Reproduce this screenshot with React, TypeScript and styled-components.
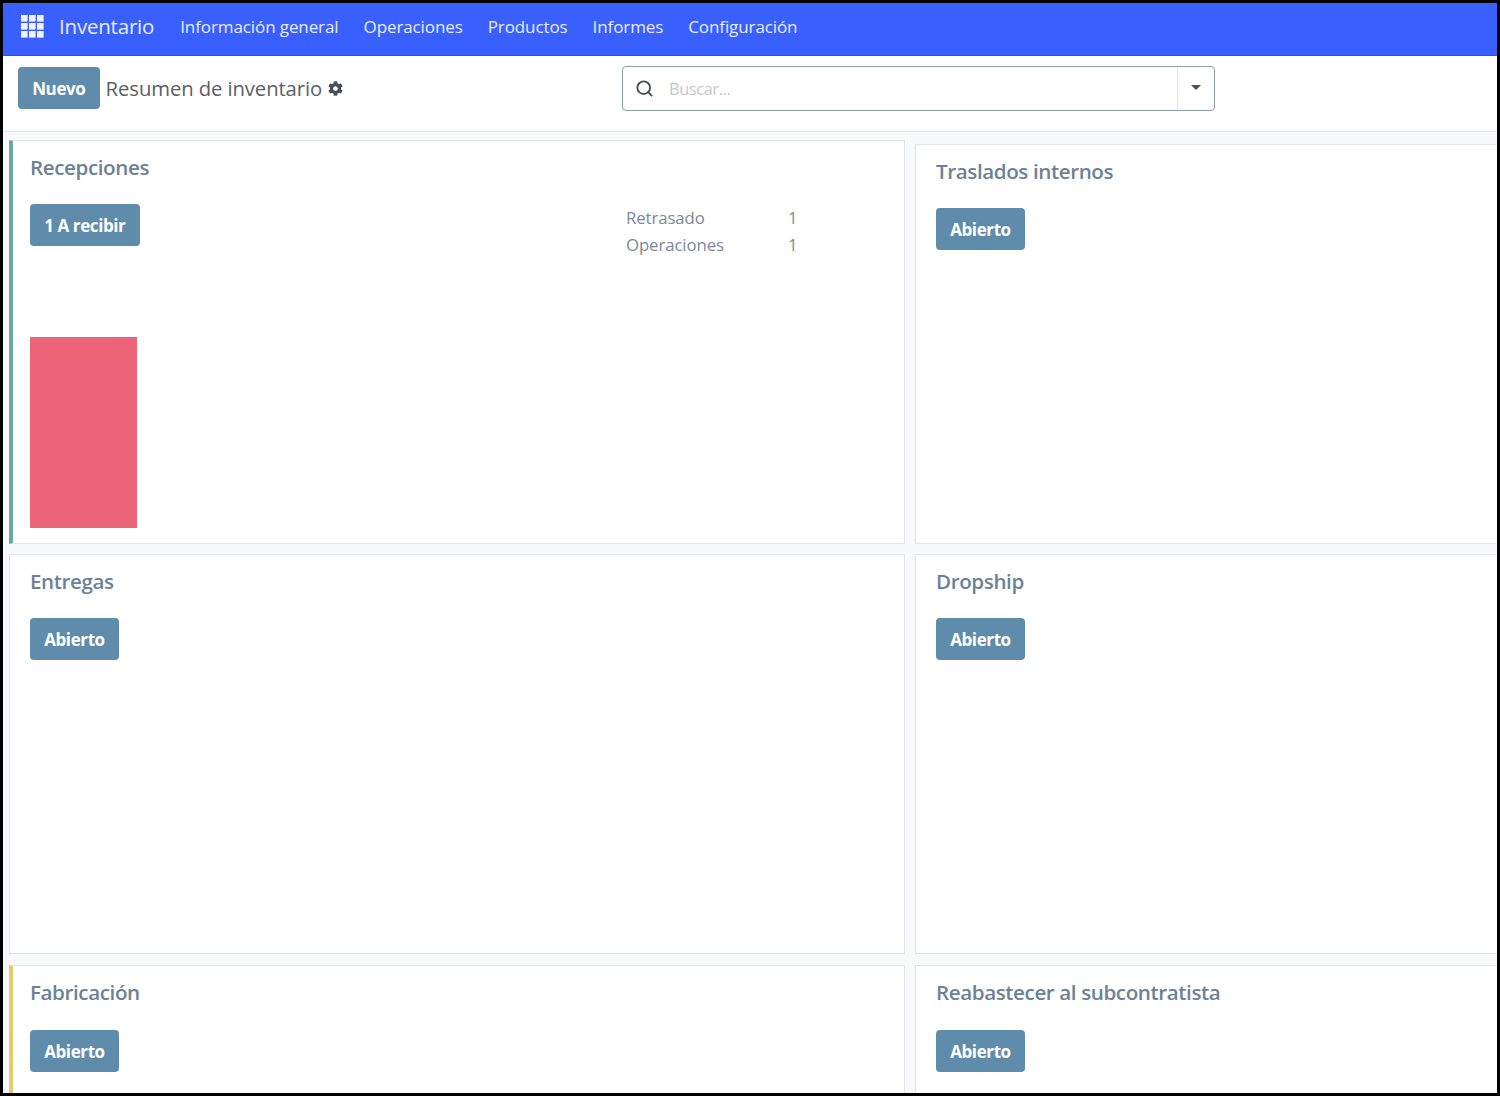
import styled, { createGlobalStyle } from "styled-components";
import { FaCog } from "react-icons/fa";
import { Search } from "lucide-react";

const GlobalStyle = createGlobalStyle`
  html, body {
    margin: 0;
    padding: 0;
    background: #000;
  }
  * {
    box-sizing: border-box;
  }
`;

const menuItems = [
  "Información general",
  "Operaciones",
  "Productos",
  "Informes",
  "Configuración",
];

function AppsIcon() {
  const cells = [0, 8, 16];
  return (
    <svg width="23" height="23" viewBox="0 0 23 23" fill="#f2f2fb">
      {cells.map((y) =>
        cells.map((x) => <rect key={`${x}-${y}`} x={x} y={y} width="6.6" height="6.6" />)
      )}
    </svg>
  );
}

export default function App() {
  return (
    <Frame>
      <GlobalStyle />
      <NavBar>
        <AppsButton>
          <AppsIcon />
        </AppsButton>
        <Brand>Inventario</Brand>
        <Menu>
          {menuItems.map((item) => (
            <MenuItem key={item}>{item}</MenuItem>
          ))}
        </Menu>
      </NavBar>
      <ControlPanel>
        <TitleArea>
          <PrimaryButton>Nuevo</PrimaryButton>
          <PageTitle>Resumen de inventario</PageTitle>
          <GearIcon />
        </TitleArea>
        <SearchBox>
          <SearchField>
            <Search size={19} color="#495057" strokeWidth={2.4} />
            <Placeholder>Buscar...</Placeholder>
          </SearchField>
          <SearchToggle>
            <Caret />
          </SearchToggle>
        </SearchBox>
      </ControlPanel>
      <Dashboard>
        <Card $accent="#6aaba0">
          <CardTitle>Recepciones</CardTitle>
          <CardBody>
            <PrimaryButton>1 A recibir</PrimaryButton>
            <Stats>
              <StatLabel>Retrasado</StatLabel>
              <StatValue>1</StatValue>
              <StatLabel>Operaciones</StatLabel>
              <StatValue>1</StatValue>
            </Stats>
          </CardBody>
          <Bar />
        </Card>
        <OffsetCard>
          <CardTitle>Traslados internos</CardTitle>
          <CardBody>
            <PrimaryButton>Abierto</PrimaryButton>
          </CardBody>
        </OffsetCard>
        <Card>
          <CardTitle>Entregas</CardTitle>
          <CardBody>
            <PrimaryButton>Abierto</PrimaryButton>
          </CardBody>
        </Card>
        <Card>
          <CardTitle>Dropship</CardTitle>
          <CardBody>
            <PrimaryButton>Abierto</PrimaryButton>
          </CardBody>
        </Card>
        <LastRowCard $accent="#e6cb6a">
          <CardTitle>Fabricación</CardTitle>
          <CardBody>
            <PrimaryButton>Abierto</PrimaryButton>
          </CardBody>
        </LastRowCard>
        <LastRowCard>
          <CardTitle>Reabastecer al subcontratista</CardTitle>
          <CardBody>
            <PrimaryButton>Abierto</PrimaryButton>
          </CardBody>
        </LastRowCard>
      </Dashboard>
    </Frame>
  );
}

const Frame = styled.div`
  width: 1500px;
  height: 1096px;
  border: 3px solid #000;
  background: #fff;
  overflow: hidden;
  display: flex;
  flex-direction: column;
  font-family: "Open Sans", "Noto Sans", sans-serif;
`;

const NavBar = styled.nav`
  flex: none;
  height: 53px;
  display: flex;
  align-items: center;
  padding: 0 0 4px 18px;
  background: #3a5fff;
  border-bottom: 1px solid #3c4fb8;
  color: #e6ebff;
`;

const AppsButton = styled.div`
  display: flex;
  margin: -2px 15px 0 0;
`;

const Brand = styled.div`
  font-size: 20.5px;
  letter-spacing: -0.2px;
  margin: -2px 26px 0 0;
`;

const Menu = styled.div`
  display: flex;
  gap: 25px;
  margin-top: -2px;
`;

const MenuItem = styled.div`
  font-size: 17px;
  letter-spacing: -0.1px;
`;

const ControlPanel = styled.div`
  flex: none;
  height: 76px;
  display: flex;
  align-items: flex-start;
  background: #fff;
  border-bottom: 1px solid #e4e6e9;
`;

const TitleArea = styled.div`
  width: 619px;
  display: flex;
  align-items: center;
  padding: 11px 0 0 15px;
`;

const PrimaryButton = styled.button`
  height: 42px;
  padding: 0 14.2px;
  border: 0;
  border-radius: 4px;
  background: #5f8cab;
  color: #fff;
  font-family: inherit;
  font-size: 17px;
  font-weight: 700;
  letter-spacing: -0.4px;
`;

const PageTitle = styled.h1`
  margin: 0 6px 0 6px;
  font-size: 20.3px;
  font-weight: 400;
  letter-spacing: -0.1px;
  color: #595f66;
`;

const GearIcon = styled(FaCog)`
  width: 15px;
  height: 15px;
  color: #495057;
`;

const SearchBox = styled.div`
  width: 593px;
  height: 45px;
  margin-top: 10px;
  display: flex;
  border: 1px solid #8aa0a6;
  border-radius: 4px;
  background: #fff;
`;

const SearchField = styled.div`
  flex: 1;
  display: flex;
  align-items: center;
  gap: 15px;
  padding-left: 12px;
`;

const Placeholder = styled.span`
  font-size: 16.2px;
  letter-spacing: -0.3px;
  color: #c4c8cc;
`;

const SearchToggle = styled.div`
  width: 37px;
  display: flex;
  align-items: center;
  justify-content: center;
  border-left: 1px solid #e4e6e9;
`;

const Caret = styled.span`
  width: 0;
  height: 0;
  margin-bottom: 3px;
  border-left: 5px solid transparent;
  border-right: 5px solid transparent;
  border-top: 5px solid #495057;
`;

const Dashboard = styled.main`
  flex: 1;
  min-height: 0;
  padding: 8px 0 0 6px;
  display: grid;
  grid-template-columns: 896px 600px;
  grid-template-rows: 404px 400px 400px;
  column-gap: 10px;
  row-gap: 10px;
  background: #f8f9fa;
  overflow: hidden;
`;

const Card = styled.section<{ $accent?: string }>`
  display: flex;
  flex-direction: column;
  padding: 13px 20px 15px ${(p) => (p.$accent ? "17px" : "20px")};
  background: #fff;
  border: 1px solid #e3e6e9;
  border-left: ${(p) => (p.$accent ? `4px solid ${p.$accent}` : "1px solid #e3e6e9")};
`;

const OffsetCard = styled(Card)`
  margin-top: 4px;
`;

const LastRowCard = styled(Card)`
  margin-top: 1px;
`;

const CardTitle = styled.h2`
  margin: 0;
  height: 26px;
  font-size: 20.6px;
  line-height: 26px;
  font-weight: 600;
  letter-spacing: -0.4px;
  color: #6b8296;
`;

const CardBody = styled.div`
  display: flex;
  justify-content: space-between;
  margin-top: 24px;

  ${LastRowCard} & {
    margin-top: 25px;
  }
`;

const Stats = styled.div`
  width: 258px;
  display: grid;
  grid-template-columns: 162px 1fr;
  grid-auto-rows: 27px;
  align-items: center;
`;

const StatLabel = styled.span`
  font-size: 16.8px;
  letter-spacing: -0.1px;
  color: #7d8a94;
`;

const StatValue = styled.span`
  font-size: 16.8px;
  color: #7d8a94;
`;

const Bar = styled.div`
  width: 107px;
  height: 191px;
  margin-top: auto;
  background: #ec6478;
`;
